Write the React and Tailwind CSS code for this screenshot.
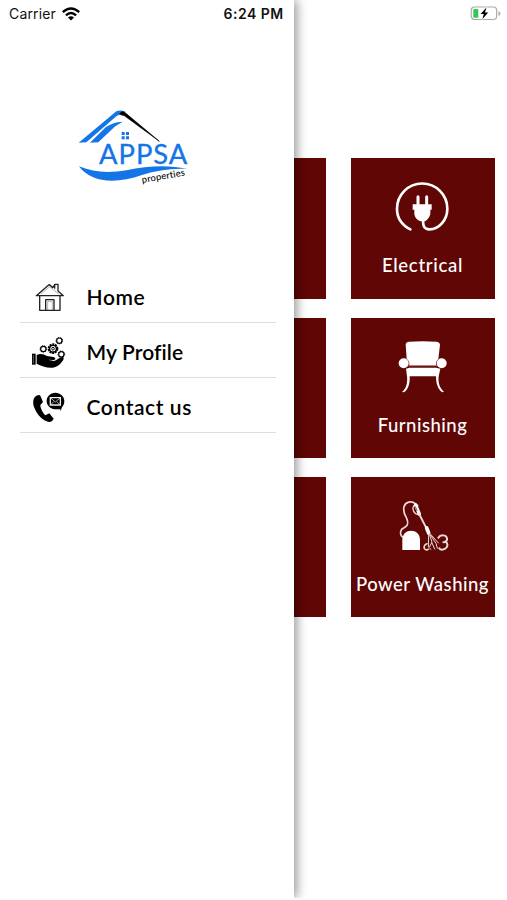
import React from "react";

const tileIcon = "block h-[90px] w-[144px]";
const rowIcon = "block h-[54px] w-[60px] shrink-0";

function PlugIcon() {
  return (
    <svg className={tileIcon} viewBox="32 26 432 270" fill="none" stroke="#fff">
      <path
        d="M210 240C183 226 170 205 170 178A75 75 0 0 1 321 178C321 211 297 240 267 240C251 240 248 230 248 212"
        strokeWidth="8"
        strokeLinecap="round"
      />
      <path d="M233 142V168M259 142V168" strokeWidth="9" strokeLinecap="round" />
      <path d="M217 165H274V181H270V194C268 205 260 212 254 216H240C229 211 223 204 222 194V181H217Z" fill="#fff" stroke="none" />
    </svg>
  );
}

function ArmchairIcon() {
  return (
    <svg className={tileIcon} viewBox="32 23 432 270" fill="#fff">
      <path d="M196 102Q197 95 207 94Q247 91 288 94Q298 95 299 103L294 146Q286 152 287 165H207Q208 151 199 146Z" />
      <circle cx="190" cy="159" r="15" />
      <circle cx="304" cy="159" r="15" />
      <path d="M205 166H290" stroke="#d9b4b4" strokeWidth="2" />
      <path d="M197 175L207 172H288L300 175L295 198H200Z" />
      <path d="M200 196C202 216 199 233 185 245L191 246C206 235 209 216 208 196ZM287 196C287 217 291 235 306 246L311 244C297 232 293 216 295 196Z" />
    </svg>
  );
}

function WasherIcon() {
  return (
    <svg className={tileIcon} viewBox="32 21 432 270" fill="none" stroke="#eadada" strokeLinecap="round">
      <path d="M187 201C178 196 178 179 190 174C204 167 205 159 199 145C192 134 188 123 191 110C195 96 213 91 225 101L232 107" strokeWidth="5" />
      <path d="M221 106C216 114 218 124 226 131L236 135" strokeWidth="4" />
      <path d="M226 105L237 132" stroke="#fff" strokeWidth="10" />
      <path d="M225 110L230 122" stroke="#600605" strokeWidth="2" />
      <path d="M237 133L257 172" strokeWidth="6" />
      <path d="M259 174L265 189" stroke="#fff" strokeWidth="11" />
      <path d="M186 240V207C188 190 198 182 212 182C227 182 237 191 239 207V240Z" fill="#fff" stroke="none" />
      <path d="M265 195L264 231L272 238M268 196L275 216L268 230M270 195L287 220L291 235M271 193L294 219M275 219L283 237" strokeWidth="3" />
      <path d="M260 221C252 224 249 231 253 237C256 240 260 240 264 238" strokeWidth="5" />
      <path d="M294 203C300 193 318 194 320 205C322 212 316 217 309 217M315 214C322 219 323 227 319 232C314 240 301 241 297 235" strokeWidth="6" />
    </svg>
  );
}

function HomeIcon() {
  return (
    <svg className={rowIcon} viewBox="0 -21 180 162" fill="none" stroke="#222" strokeWidth="4" strokeLinejoin="round">
      <path d="M49 62L87 29L92 32L98 38L102 32L104 39L104 28H114V48L130 62Z" />
      <path d="M59 63V106H120V63M77 106V74H102V106" />
      <path d="M83 105V79H97V105M63 57L89 35L116 57" strokeWidth="1" />
    </svg>
  );
}

function ProfileIcon() {
  return (
    <svg className={rowIcon} viewBox="0 -6 180 162" fill="none" stroke="#000">
      <path d="M36 86H47V119H36Z" fill="#000" stroke="none" />
      <path d="M40 90V115" stroke="#888" strokeWidth="2" />
      <path
        d="M50 90C60 85 70 86 81 93L100 96C108 98 108 104 101 105L84 104L102 108C110 107 117 97 126 96C133 96 132 103 127 109C118 121 110 127 98 128C78 129 64 123 50 116Z"
        fill="#000"
        stroke="none"
      />
      <circle cx="99" cy="71" r="13" strokeWidth="6" strokeDasharray="6 2.2" />
      <circle cx="99" cy="71" r="10" strokeWidth="4" />
      <circle cx="99" cy="71" r="4" strokeWidth="3" />
      <g strokeWidth="3.5">
        <circle cx="118" cy="47" r="8" />
        <circle cx="70" cy="72" r="8" />
        <circle cx="124" cy="88" r="8" />
      </g>
      <g strokeWidth="3" strokeDasharray="3 4">
        <circle cx="118" cy="47" r="10" />
        <circle cx="70" cy="72" r="10" />
        <circle cx="124" cy="88" r="10" />
      </g>
    </svg>
  );
}

function ContactIcon() {
  return (
    <svg className={rowIcon} viewBox="0 -6 180 162" fill="#000">
      <path d="M54 46L49 47C39 53 37 68 43 83C51 104 68 122 87 126C94 126 99 121 101 116L88 100L76 106C68 98 61 84 61 75L69 66L61 47Q58 43 54 46Z" />
      <path d="M106 38C91 38 80 49 80 63C80 76 90 86 104 88L121 88L122 94L125 83C130 78 133 71 133 63C133 49 121 38 106 38Z" />
      <path d="M91 53H121V75H91Z" fill="none" stroke="#eee" strokeWidth="4" />
      <path d="M92 54L106 66L120 54M92 75L101 65M120 75L111 65" fill="none" stroke="#ccc" strokeWidth="2.5" />
    </svg>
  );
}

function Logo() {
  return (
    <svg className="ml-[70px] block h-[95px] w-[130px]" viewBox="0 0 390 285">
      <path d="M26 128L139 34Q151 28 166 35L156 43Q149 41 139 49L49 127Z" fill="#1475e6" />
      <path d="M60 128L107 82Q126 67 158 65Q145 73 134 80L85 127Z" fill="#1475e6" />
      <path d="M149 43Q152 32 164 37L268 124L163 47Z" fill="#000" stroke="#000" strokeWidth="2" />
      <path d="M155 96H164V105H155ZM168 96H177V105H168ZM155 109H164V118H155ZM168 109H177V118H168Z" fill="#1475e6" />
      <text
        x="87"
        y="192"
        textLength="265"
        fontSize="82"
        fill="#1475e6"
        stroke="#1475e6"
        strokeWidth="1"
        className="font-['Lato',sans-serif]"
      >
        APPSA
      </text>
      <path d="M27 199C73 219 119 219 169 211C234 198 293 194 352 207C307 204 260 211 216 225C135 254 61 247 27 199Z" fill="#1475e6" />
      <text
        x="217"
        y="249"
        textLength="131"
        fontSize="28"
        transform="rotate(-10 217 249)"
        className="font-['Lato',sans-serif] font-medium [font-variant-ligatures:none]"
      >
        properties
      </text>
    </svg>
  );
}

const menu = [
  { label: "Home", Icon: HomeIcon, text: "tracking-[0.6px]" },
  { label: "My Profile", Icon: ProfileIcon, text: "tracking-[0.1px]" },
  { label: "Contact us", Icon: ContactIcon, text: "tracking-[0.6px]" },
];

const services = [
  { label: "Electrical", Icon: PlugIcon, text: "tracking-[0.7px]" },
  { label: "Furnishing", Icon: ArmchairIcon, text: "tracking-[0.5px]" },
  { label: "Power Washing", Icon: WasherIcon, text: "tracking-[0.5px]" },
];

function Services() {
  return (
    <div className="grid grid-cols-[144px_144px] justify-end gap-x-[24.5px] gap-y-[18.5px] pr-[12.5px] pt-[158.4px]">
      {services.map(({ label, Icon, text }) => (
        <React.Fragment key={label}>
          <div className="h-[140.7px] bg-[#600605]" />
          <div className="flex h-[140.7px] flex-col items-center bg-[#600605]">
            <Icon />
            <span className={`mt-[5px] whitespace-nowrap font-['Lato',sans-serif] text-[18.5px] font-medium leading-[24px] text-white ${text}`}>
              {label}
            </span>
          </div>
        </React.Fragment>
      ))}
    </div>
  );
}

function Drawer() {
  return (
    <aside className="absolute left-0 top-0 h-[898px] w-[294px] bg-white pt-[100px] shadow-[3px_0_10px_rgba(0,0,0,0.4)] [clip-path:inset(0_-20px_0_0)]">
      <Logo />
      <nav className="mx-5 mt-[72.5px] w-[256px]">
        {menu.map(({ label, Icon, text }) => (
          <div key={label} className="flex h-[55px] items-center border-b border-[#dedede]">
            <Icon />
            <span className={`ml-[6.5px] pt-[5px] font-['Lato',sans-serif] text-[21px] font-semibold leading-[24px] text-black ${text}`}>
              {label}
            </span>
          </div>
        ))}
      </nav>
    </aside>
  );
}

function StatusBar() {
  return (
    <div className="absolute left-0 top-0 flex h-[27px] w-full items-center font-['Inter',sans-serif] text-[14px] text-[#111]">
      <span className="ml-[9px] w-[53px] tracking-[0.15px]">Carrier</span>
      <svg className="h-[14px] w-[18px]" viewBox="0 0 18 14" fill="none" stroke="#000" strokeWidth="2.4">
        <path d="M0.8 5.2Q9 -2 17.2 5.2M3.9 8.4Q9 3.8 14.1 8.4" />
        <path d="M6 10.6Q9 7.8 12 10.6L9 13.6Z" fill="#000" stroke="none" />
      </svg>
      <span className="ml-[143.5px] whitespace-nowrap font-semibold tracking-[0.5px]">6:24 PM</span>
      <svg className="ml-auto mr-[5px] h-[15px] w-[32px]" viewBox="0 0 32 15">
        <rect x="1.2" y="1" width="25.5" height="12.5" rx="3.5" fill="#fff" stroke="#aaa" strokeWidth="1.2" />
        <path d="M28.5 5V10Q30.5 9 30.5 7.5T28.5 5Z" fill="#aaa" />
        <rect x="3.3" y="3" width="5" height="8.8" rx="1.2" fill="#35c759" />
        <path d="M16.5 1.5L10.5 8.1H13.8L12.3 13.3L18.2 6.5H15Z" fill="#000" stroke="#fff" strokeWidth="1.5" paintOrder="stroke" />
      </svg>
    </div>
  );
}

export default function App() {
  return (
    <div className="relative h-[900px] w-[507px] overflow-hidden bg-white">
      <Services />
      <Drawer />
      <StatusBar />
    </div>
  );
}
